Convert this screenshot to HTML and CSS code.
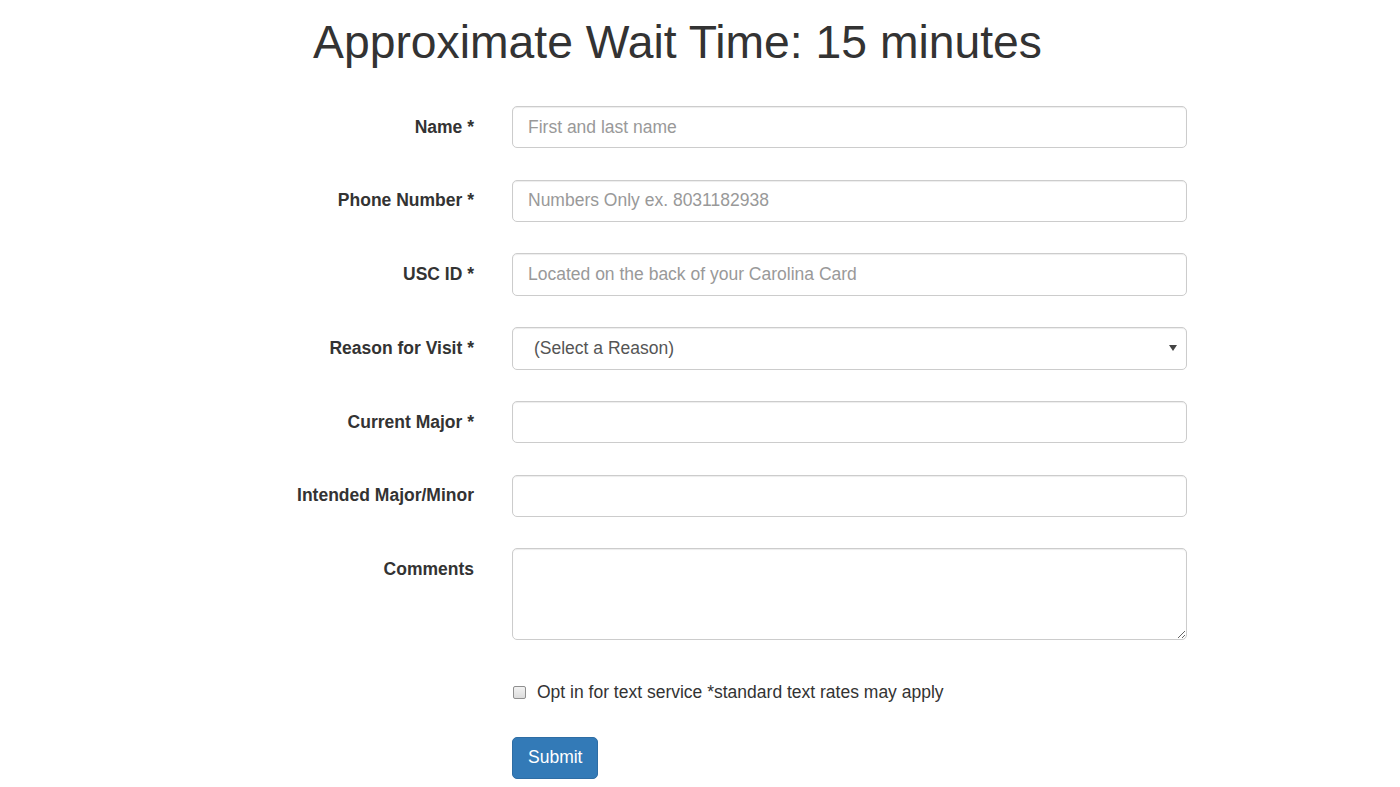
FILE: index.html
```html
<!DOCTYPE html>
<html lang="en">
<head>
<meta charset="utf-8">
<title>Check In</title>
<link rel="stylesheet" href="styles.css">
</head>
<body>
<main class="page">
  <h1 class="title">Approximate Wait Time: 15 minutes</h1>
  <form class="form">
    <div class="group">
      <label class="label" for="name">Name *</label>
      <div class="field"><input class="control" id="name" type="text" placeholder="First and last name"></div>
    </div>
    <div class="group">
      <label class="label" for="phone">Phone Number *</label>
      <div class="field"><input class="control" id="phone" type="text" placeholder="Numbers Only ex. 8031182938"></div>
    </div>
    <div class="group">
      <label class="label" for="uscid">USC ID *</label>
      <div class="field"><input class="control" id="uscid" type="text" placeholder="Located on the back of your Carolina Card"></div>
    </div>
    <div class="group">
      <label class="label" for="reason">Reason for Visit *</label>
      <div class="field select-wrap">
        <select class="control select" id="reason">
          <option>(Select a Reason)</option>
        </select>
      </div>
    </div>
    <div class="group">
      <label class="label" for="major">Current Major *</label>
      <div class="field"><input class="control" id="major" type="text"></div>
    </div>
    <div class="group">
      <label class="label" for="intended">Intended Major/Minor</label>
      <div class="field"><input class="control" id="intended" type="text"></div>
    </div>
    <div class="group">
      <label class="label" for="comments">Comments</label>
      <div class="field"><textarea class="control area" id="comments" rows="3"></textarea></div>
    </div>
    <div class="group">
      <div class="label"></div>
      <div class="field">
        <label class="check"><input class="box" type="checkbox"><span>Opt in for text service *standard text rates may apply</span></label>
      </div>
    </div>
    <div class="group">
      <div class="label"></div>
      <div class="field"><button class="btn" type="submit">Submit</button></div>
    </div>
  </form>
</main>
</body>
</html>
```
FILE: styles.css
```css
* { box-sizing: border-box; }
html, body { margin: 0; padding: 0; background: #fff; }
body {
  font-family: "Liberation Sans", Arial, sans-serif;
  font-size: 17.5px;
  line-height: 25px;
  color: #333;
}
.page { padding-top: 17px; }
.title {
  margin: 0 0 0 313px;
  font-size: 46.3px;
  font-weight: 400;
  line-height: 1.1;
  color: #333;
}
.form {
  margin: 38px 0 0 274px;
  display: flex;
  flex-direction: column;
  gap: 31.25px;
}
.group {
  display: flex;
  gap: 38px;
  align-items: flex-start;
}
.label {
  flex: 0 0 200px;
  text-align: right;
  font-weight: 700;
  padding-top: 8.75px;
  line-height: 25px;
}
.field { flex: 0 0 675px; }
.control {
  display: block;
  width: 100%;
  height: 42.5px;
  padding: 7.5px 15px;
  font-family: inherit;
  font-size: 17.5px;
  line-height: 25px;
  color: #555;
  background: #fff;
  border: 1px solid #ccc;
  border-radius: 5px;
  box-shadow: inset 0 1px 1px rgba(0,0,0,.075);
  outline: none;
}
.control::placeholder { color: #999; opacity: 1; }
.select-wrap { position: relative; }
.select {
  appearance: none;
  -webkit-appearance: none;
  padding-left: 21px;
}
.select-wrap::after {
  content: "";
  position: absolute;
  right: 10px;
  top: 18px;
  border-left: 4px solid transparent;
  border-right: 4px solid transparent;
  border-top: 6px solid #444;
}
.area { height: 92px; resize: vertical; }
.check {
  display: flex;
  align-items: center;
  gap: 11px;
  padding-top: 8.75px;
  font-weight: 400;
  line-height: 25px;
}
.box {
  appearance: none;
  -webkit-appearance: none;
  margin: 0 0 0 1px;
  width: 13px;
  height: 13px;
  border: 1px solid #8f8f8f;
  border-radius: 2px;
  background: linear-gradient(#f2f2f2, #dcdcdc);
}
.btn {
  display: block;
  height: 42.5px;
  padding: 7.5px 15px;
  font-family: inherit;
  font-size: 17.5px;
  line-height: 25px;
  color: #fff;
  background: #337ab7;
  border: 1px solid #2e6da4;
  border-radius: 5px;
  cursor: pointer;
}
```
